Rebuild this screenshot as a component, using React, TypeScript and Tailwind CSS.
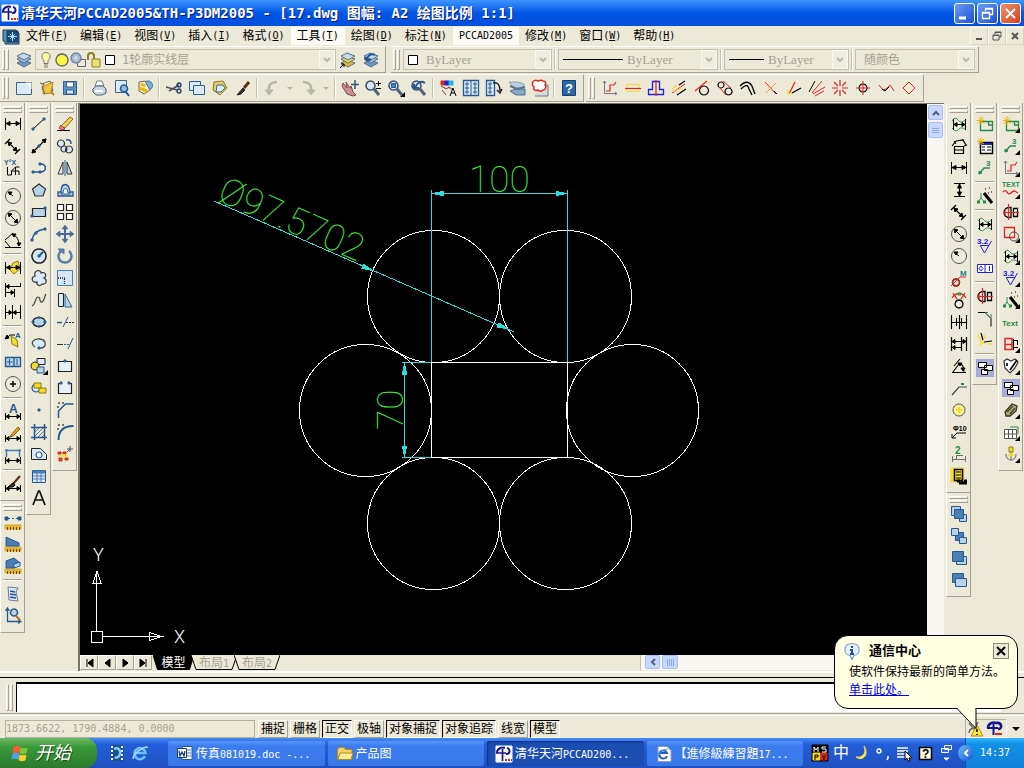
import type { ReactNode } from 'react';
import clsx from 'clsx';

/* ---------- palette used by the toolbar drawings ---------- */

const K = '#000000';
const B = '#24588f';
const L = '#b7d3ea';
const M = '#4a7fb5';
const R = '#e02424';
const G = '#2b8a4a';
const Y = '#f4dc28';
const N = '#2020d8';
const S = '#6d7a90';
const W = '#ffffff';
const X = 'none';

type Path = [d: string, stroke: string, fill?: string, width?: number];
type Label = [text: string, x: number, y: number, size: number, color: string];

interface Glyph {
  p: Path[];
  t?: Label;
}

const dimBase: Path[] = [
  ['M1.5 3v12M16.5 3v12M2 8.5h14', K],
  ['M2 8.5l4-2v4zM16 8.5l-4-2v4z', K, K],
];
const dimLow: Path[] = [
  ['M1.5 10v7M16.5 10v7M2 13.5h14', K],
  ['M2 13.5l3-2v4zM16 13.5l-3-2v4z', K, K],
];
const ruler: Path[] = [
  ['M1 12h16v4h-16z', '#d9a520', '#e8b83a'],
  ['M3.5 14v3M6.5 14v3M9.5 14v3M12.5 14v3M15.5 14v3', '#6a4a00'],
];
const dimHole: Path[] = [
  ['M2 6c3-5 5-2 7 0s5 1 7-2M2 13c3 4 5 3 7 1s5-1 7 1', G],
  ['M3.5 4v11M15.5 4v11M4 9.5h11', K],
  ['M4 9.5l3-2v4zM15 9.5l-3-2v4z', K, K],
];
const sunFrame: Path[] = [
  ['M4.5 6.5h12v9h-12zM12.5 6v4h4', G, X, 1.3],
  ['M5 1v9M1 5.5h8M2 2.5l6 6M8 2.5l-6 6', '#e8b800'],
];
const wand: Path[] = [
  ['M8 6l8 10', K, X, 3],
  ['M5 6v5l-3 4M5 11l3 4', G],
  ['M1 15h3M7 15h3', G, X, 3],
  ['M9 2h1M13 1h1M15 5h1M12 6h1', '#7a4030', X, 1.5],
];
const shaftHole: Path[] = [
  ['M7 4.5h2v10h-2a5 5 0 0 1 0-10zM11.5 5.5h4v8h-4z', K, X, 1.3],
  ['M1 9.5h16M6.5 1v16M3 6v7', R, X, 1.2],
];
const windows: Path[] = [
  ['M0 0h18v18h-18z', '#9aa0d0', '#a9addb'],
  ['M2.5 3.5h8v5h-8zM8.5 6.5h8v5h-8zM5.5 10.5h6v5h-6z', K, W],
];
const roughMark: Path[] = [['M4 8.5h9M4.5 9l4 7 7-12', N]];
const axes: Path[] = [
  ['M3.5 2v12.5h12M2 4l1.5-2 1.5 2M14 13l2 1.500-2 1.500', S],
  ['M5 12h4v-6h4l2-3', R, X, 1.2],
];
const pencil: Path[] = [['M7 10l7-8 2 2-7 7-3 1z', '#7a5a10', '#e8a820']];
const layers = (a: string, b: string, c: string): Path[] => [
  ['M2 12l6-3 8 3-7 4z', '#58708c', c],
  ['M2 8l6-3 8 3-7 4z', '#58708c', b],
  ['M2 5l6-3 8 3-7 4z', '#58708c', a],
];
const lens: Path[] = [
  ['M6.5 2a4.5 4.5 0 1 0 .01 0z', '#40506a', '#d5e6f5', 1.5],
  ['M10 10l5 6', '#50617c', X, 3],
];

const glyphs: Record<string, Glyph> = {
  /* horizontal toolbars */
  layers: { p: layers('#c7d9ea', '#9fbdd8', '#6f98c2') },
  layerCurrent: { p: [...layers('#c7d9ea', '#f0dc50', '#e0b830'), ['M1 17l4-4M5 16v-3h-3', K]] },
  layerPrevious: { p: [...layers('#c7d9ea', '#9fbdd8', '#6f98c2'), ['M5 9c0-5 5-7 8-5M5 10l-2-4M5 10l4-2', B, X, 2]] },
  new: { p: [['M1.5 3.5h15v12h-15z', '#3b648f', '#dbeaf8'], ['M11 4h5v6', W, W]] },
  open: { p: [['M4 5l8-3 3 10-9 3z', '#6e675a', '#f6f2df'], ['M5 15l1-8 9-4-2 11z', '#b88918', '#f0c64a'], ['M2 4l4 1-2 4 3 6', '#6e675a', '#d8cf9c'], ['M13 13l3 3', '#b88918', X, 2]] },
  save: { p: [['M2.5 2.5h13v13h-13z', '#2f5d91', '#5b93ca'], ['M5.5 3h7v5h-7z', '#3b648f', W], ['M5.5 11h7v4h-7z', '#2f5d91', '#dbeaf8']] },
  print: { p: [['M5 7l2-5h5l2 5z', '#6b7a90', W], ['M3 10l3-3h7l3 3v4l-4 2h-6l-3-3z', '#4c5d78', '#c6d4e6'], ['M5 12h8', W, X, 2]] },
  preview: { p: [['M2.5 1.5h11v12h-11z', '#3b648f', '#dbeaf8'], ['M11 6a3.5 3.5 0 1 0 .01 0z', B, '#8fbce4', 1.5], ['M13 13l3 4', B, X, 2]] },
  publish: { p: [['M12 2a4.5 4.5 0 1 0 .01 0z', '#2f6da8', '#79b2e6'], ['M3 3l6-1 2 4 3 5-6 4-5-3z', '#6e675a', '#f1edd8'], ['M3 9l8 3M5 5l4 2', '#e8b800', X, 3]] },
  cut: { p: [['M1 8l11 3M4 12l10-6', '#4b4f5c', X, 1.5], ['M14 4a2 2 0 1 0 .01 0zM14 10a2 2 0 1 0 .01 0z', '#24406b', X, 1.5]] },
  copy: { p: [['M1.5 2.5h11v9h-11z', '#2c608f', '#dbeaf8'], ['M5.5 6.5h11v9h-11z', '#2c608f', '#dbeaf8']] },
  paste: { p: [['M3 3l9-1 4 7-7 7-7-5z', '#8c7a20', '#e3cf62'], ['M6 6h6l2 3-4 4h-5z', '#3b648f', '#dbeaf8']] },
  brush: { p: [['M15 3l-5 6', '#5c3018', X, 3], ['M9 9l-6 7 4-1 4-4z', '#222', '#333']] },
  undo: { p: [['M14 3c-6 0-9 3-8 9', '#b8b6a6', X, 2.5], ['M2 11h8l-4 5z', '#b8b6a6', '#b8b6a6']] },
  redo: { p: [['M4 3c6 0 9 3 8 9', '#b8b6a6', X, 2.5], ['M8 11h8l-4 5z', '#b8b6a6', '#b8b6a6']] },
  pan: { p: [['M2 4l4 5-1-6 4 6 1-2 2 6 3 3-3 1-6-2-5-8z', '#7c4a4a', '#cf8e8e'], ['M14 1v9M10 5.5h8', '#37507c', X, 1.5]] },
  zoomRt: { p: [...lens, ['M12 4.5h5M14.5 2v5M12 9.5h5', K]] },
  zoomWin: { p: [...lens, ['M4.5 4.5h4v4h-4z', B, M]] },
  zoomPrev: { p: [...lens, ['M15 4c-5-3-8 0-10 5M4 5v4h5', B, X, 2]] },
  props: { p: [['M2 2h4v4h-4z', R, R], ['M6 2h4v4h-4z', N, N], ['M10 2h4v4h-4z', '#18b8e0', '#18b8e0'], ['M2 7l5 3 3-2 4 3M3 11l4 5', '#7c4a4a', '#cf8e8e'], ['M11 17l3-8 3 8M12 14h4', K]] },
  design: { p: [['M1.5 1.5h15v15h-15z', B, '#dbeaf8', 1.3], ['M9 2v14', B], ['M4 4h2v2h-2zM4 8h2v2h-2zM4 12h2v2h-2zM12 4h2v2h-2zM12 8h2v2h-2zM12 12h2v2h-2z', B, W]] },
  palettes: { p: [['M1.5 1.5h8v15h-8z', B, '#dbeaf8', 1.3], ['M4 4h2v2h-2zM4 8h2v2h-2zM4 12h2v2h-2z', B, W], ['M8 4c5-1 7 2 7 8M12 11l3 3 2-4', '#222', X, 1.5]] },
  sheets: { p: [['M1 3h9l6 2v4h-10z', '#8ba6c0', '#b9cede'], ['M2 12l6-2h9v6h-9z', '#54708c', '#86a8c4'], ['M2 7l7 3 8-2', '#5f7488', X, 2]] },
  markup: { p: [['M5 6h12v11h-13', S, '#dadada'], ['M2 3c1-2 3-2 5-1 2-1 4-1 5 0 3 0 3 3 2 4 2 2 0 5-2 5-2 2-4 1-5 0-3 1-5 0-4-3-2-1-2-4-1-5z', R, W, 1.5]] },
  help: { p: [['M2.5 1.5h13v15h-13z', '#173e70', '#2d66a5']], t: ['?', 5, 14, 13, '#fff'] },
  hAxes: { p: axes },
  hCenter: { p: [['M3 5.5h12v7h-12z', Y], ['M1 9.5h16', R, X, 1.2]] },
  hSymm: { p: [['M5.5 2.5h7v8h4v5h-15v-5h4z', N, X, 1.3], ['M9 1v16', R, X, 1.3]] },
  hParallel: { p: [['M9 6l6-4M7 16l9-6', K, X, 1.3], ['M2 14l13-9', R], ['M2 10l5-4M4 13l7-4', Y, X, 1.3]] },
  hTangent: { p: [['M11 7a4.5 4.5 0 1 0 .01 0z', K, X, 1.2], ['M2 12l12-10', R, X, 1.2]] },
  hTangent2: { p: [['M5 3a3 3 0 1 0 .01 0zM12.5 9a3.5 3.5 0 1 0 .01 0z', K, X, 1.2], ['M7 2l8 7M3 8l7 8', R]] },
  hCurve: { p: [['M1 7c5-5 9-5 12 0l3 8M2 10c5-5 7-4 8 0l3 6', K, X, 1.3]] },
  hCross: { p: [['M3 3l11 12', R], ['M14 4l-10 10', '#f0a020'], ['M12 12l3 3', K]] },
  hAngle: { p: [['M4 15l6-12', R, X, 1.3], ['M7 14l9-5', K, X, 1.3], ['M3 10v5l4-1', Y, X, 1.3]] },
  hRays: { p: [['M1 13l6-11', K], ['M4 14l10-12M5 15l12-7M7 17l9-5', R]] },
  hStar: { p: [['M9 1v6M9 11v6M1 9h6M11 9h6M3 3l4 4M11 11l4 4M15 3l-4 4M7 11l-4 4', R, X, 1.2]] },
  hTarget: { p: [['M9 5a4 4 0 1 0 .01 0z', K, X, 1.2], ['M9 2v14M2 9h14', R]] },
  hWave: { p: [['M2 6l4 5 3-1 4-4 4 6', R], ['M5 10l3 2 4-4', K]] },
  hDiamond: { p: [['M9 3l6 6-6 6-6-6z', R]] },

  /* dimension column */
  dimLinear: { p: dimBase },
  dimAligned: { p: [['M1 7l5-5M11 17l5-5M4 5l9 9', K, X, 1.2], ['M4 5l4 1-3 3zM13 14l-4-1 3-3z', K, K]] },
  dimOrdinate: { p: [['M3.5 8v8h4v-4l4-4h4M7 12h8v4M11.5 8v8', K]], t: ['Y°X', 0, 6, 7, B] },
  dimRadius: { p: [['M9 1.5a7.5 7.5 0 1 0 .01 0z', '#555'], ['M4 5l5 4', K], ['M4 5l4 0-2 3z', K, K]] },
  dimDiameter: { p: [['M9 1.5a7.5 7.5 0 1 0 .01 0z', '#555'], ['M4 4l10 10', K], ['M4 4l4 1-3 3zM14 14l-4-1 3-3z', K, K]] },
  dimAngular: { p: [['M1 9l8-7M1 16.5h16M1 10l5 6M8 3c5 2 7 6 7 12', K], ['M8 3l4 0-2 3zM15 15l-2-3h4z', K, K]] },
  dimQuick: { p: [['M9 4l5-2 2 8-6 5-4-4z', '#8c7a10', Y], ...dimBase] },
  dimBaseline: { p: [['M1.5 2v14M16.5 2v3M10.5 8v8M2 5.5h15M2 11.5h8', K], ['M2 5.5l3-2v4zM10 11.5l-3-2v4z', K, K]] },
  dimContinue: { p: [['M1.5 2v14M8.5 2v14M16.5 2v14M2 9.5h14', K], ['M8 9.5l-3-2v4zM9 9.5l3-2v4z', K, K]] },
  dimLeader: { p: [['M7 5l6 4 1 7-6-3z', '#8c7a10', Y], ['M2 8l4-4h5', K], ['M1 8l2-4 2 3z', K, K]], t: ['A', 11, 7, 8, B] },
  dimTolerance: { p: [['M1.5 4.5h15v9h-15zM10 5v8', B, L, 1.3], ['M5.5 6v6M2.500 9h6M13 6v6', B]] },
  dimCenter: { p: [['M9 1.5a7.5 7.5 0 1 0 .01 0z', '#555'], ['M9 6v6M6 9h6', K, X, 1.5]] },
  dimEdit: { p: dimLow, t: ['A', 5, 10, 12, B] },
  dimTextEdit: { p: [...dimLow, ...pencil] },
  dimUpdate: { p: [['M1 3.5h16M2.500 2v8M15.500 2v8', M, X, 1.5], ...dimLow] },
  dimStyle: { p: [...dimLow, ['M16 1l-7 8', '#5c3018', X, 2], ['M9 8l-5 4h5l2-2z', K, '#333']] },
  distance: { p: [...ruler, ['M4 5.5h2M8 5.5h2M12 5.5h2', B], ['M1 4h3v3h-3zM14 4h3v3h-3z', B, B]] },
  area: { p: [...ruler, ['M2 2l13 6v3h-13z', B, M]] },
  mass: { p: [...ruler, ['M2 4l8-3 6 5-6 5h-8z', B, M], ['M10 7l6-2v4l-6 2z', B, L]] },
  list: { p: [['M4 2l10 1-2 4 2 9-9-1z', S, '#dbeaf8'], ['M6 6l5 1M6 9l6 1M6 12l6 1', B, X, 1.5]] },
  locate: { p: [['M3.5 2v12.5h13M1.500 4l2-3 2 3M14 12.500l3 2-3 2', B, X, 1.3], ['M10 2a3.5 3.5 0 1 0 .01 0z', B, L, 1.5], ['M12 9l4 4', '#b06a30', X, 2]] },

  /* draw column */
  line: { p: [['M3 14l12-11', K], ['M2 13h2v2h-2zM13 3h2v2h-2z', B, M]] },
  xline: { p: [['M2 16l14-14', K, X, 1.3], ['M2 16l1-4 3 3zM16 2l-4 1 3 3z', K, K], ['M8 8h2v2h-2z', B, B]] },
  pline: { p: [['M3 13h7c7 0 7-8 1-8', B, X, 1.5], ['M2 12h2v2h-2zM9 12h2v2h-2zM9 4h2v2h-2z', B, M]] },
  polygon: { p: [['M9 3l6.5 5-2.5 7h-8l-2.5-7z', '#333', L, 1.2]] },
  rect: { p: [['M2.5 5.5h13v8h-13z', '#222', L, 1.2], ['M1 12h2v2h-2zM14 4h2v2h-2z', B, M]] },
  arc: { p: [['M2 15c1-7 5-10 13-11', B, X, 1.5], ['M1 14h2v2h-2zM5 7h2v2h-2zM14 3h2v2h-2z', B, M]] },
  circle: { p: [['M9 2a7 7 0 1 0 .01 0z', '#222', '#d5e6f5', 1.5], ['M9 9l4-4', B, X, 2], ['M8 8h2v2h-2z', B, B]] },
  cloud: { p: [['M5 7c-2-6 6-7 6-3 5-2 6 4 3 5 4 2 2 7-2 6-2 3-6 1-5-2-6 1-6-5-2-6z', '#333', '#dbeaf8', 1.2]] },
  spline: { p: [['M2 15c4-2 3-9 6-9s1 6 4 5 2-6 4-8', '#444', X, 1.2]] },
  ellipse: { p: [['M9 4.5c8 0 8 9 0 9s-8-9 0-9z', '#222', L, 1.5], ['M2 8h2v2h-2zM14 8h2v2h-2zM8 4h2v1h-2zM8 13h2v1h-2z', B, B]] },
  ellipseArc: { p: [['M5 12c-6-4-1-9 5-8 7 1 7 9 0 9', '#444', '#dbeaf8', 1.3], ['M8 12h2v2h-2z', B, M]] },
  insert: { p: [['M7 1.5h8v6h-8z', '#222', '#dbeaf8'], ['M5 5a4 4 0 1 0 .01 0z', '#222', Y], ['M7 10h7v6h-7z', B, L]] },
  block: { p: [['M6 5a4 4 0 1 0 .01 0z', B, '#dbeaf8', 1.2], ['M4 4h7v5h-7zM9 9h7v5h-7z', '#8c7a10', Y]] },
  point: { p: [['M8 8h2v2h-2z', B, B]] },
  hatch: { p: [['M4.5 1v16M14.5 1v16M1 4.5h16M1 14.5h16', B, X, 1.5], ['M5 9l4-4M5 13l8-8M8 14l6-6M12 14l2-2', M]] },
  region: { p: [['M1.5 3.5h9l6 6v5h-15z', '#222', '#dbeaf8'], ['M9 7a3 3 0 1 0 .01 0z', B, W, 1.2]] },
  table: { p: [['M2.5 3.5h13v12h-13z', B, '#dbeaf8'], ['M3 5h12', M, X, 3], ['M7 4v11M11 4v11M3 9h12M3 12h12', M]] },
  text: { p: [['M3 16l5.500-14h1l5.500 14M5 11h8', '#111', X, 1.7]] },

  /* modify column */
  erase: { p: [['M1 15.5h13', K], ['M5 11l9-9 3 2-8 9z', '#8c6a10', '#f0cf60'], ['M5 10l4 4-3 1-3-2z', '#a04040', '#f08080']] },
  copyObj: { p: [['M5 3a3.5 3.5 0 1 0 .01 0zM13 9a3.5 3.5 0 1 0 .01 0zM8 9a3 3 0 1 0 .01 0z', '#333', '#dbeaf8', 1.2], ['M10 3c4-1 5 1 5 4', B, X, 1.5]] },
  mirror: { p: [['M7 3v12h-5z', '#333', '#dbeaf8'], ['M11 3v12h5z', '#333', L], ['M9 1v16', B]] },
  offset: { p: [['M2 15v-4h3c0-10 8-10 9 0h3v4z', B, L, 1.3], ['M5 13h9v-1h-2c0-6-5-6-5 0h-2z', B, W]] },
  array: { p: [['M1.5 1.5h6v6h-6zM10.5 1.5h6v6h-6zM1.5 10.5h6v6h-6zM10.5 10.5h6v6h-6z', '#222', W, 1.2]] },
  move: { p: [['M9 3v12M3 9h12', '#45689c', X, 2], ['M9 0l3 4h-6zM9 18l3-4h-6zM0 9l4-3v6zM18 9l-4-3v6z', '#45689c', '#45689c', 0.5]] },
  rotate: { p: [['M5 4a6.5 6.5 0 1 0 8 0', '#5b7ba5', X, 2.5], ['M2 2h6v5z', '#5b7ba5', '#5b7ba5']] },
  scale: { p: [['M1.5 1.5h15v15h-15z', M, '#d5e6f5'], ['M2 9h1M4 9h1M6 9h1M8 9h1M8.5 10v1M8.5 12v1M8.5 14v1', '#222', X, 1.3]] },
  stretch: { p: [['M2.5 2.5h5v13h-5z', '#222', '#dbeaf8'], ['M9 3l7 13h-7z', '#3b648f', L]] },
  trim: { p: [['M1 9.5h5', B, X, 1.5], ['M7 14l5-10', B], ['M10 9.5h2M13 9.5h2M16 9.5h2', '#333']] },
  extend: { p: [['M1 9.5h6', '#333'], ['M8 9.5h2M11 9.5h2', B], ['M12 14l5-11', B]] },
  breakPt: { p: [['M2.5 4.5h13v10h-13z', '#222', '#e8f1fa', 1.2], ['M8 3h2v2h-2z', B, M]] },
  breakObj: { p: [['M5 4.5h-2.5v10h13v-10h-2.5', '#222', '#e8f1fa', 1.2], ['M4 3h2v2h-2zM12 3h2v2h-2z', B, S]] },
  chamfer: { p: [['M2.5 17v-7l7-7h8', B, X, 1.5], ['M2 2h2M6 2h2M2 5v2', K]] },
  fillet: { p: [['M2.5 17c0-9 4-14 15-14', B, X, 2], ['M2 2h2M6 2h2M2 5v2', K]] },
  explode: { p: [['M2 7h3v2h-3zM7 7h3v2h-3zM3 13h3v3h-3zM9 13h3v2h-3z', '#c02818', '#e86030'], ['M5 10l3 2M7 10l4 1M2 11h2', Y, X, 2], ['M11 7l3-3M14 1v6M11 4h6', '#555']] },

  /* mechanical columns */
  holeDim: { p: dimHole },
  house: { p: [['M4.5 9.5h9v7h-9zM2 9l4-5 7-1 3 5M13 4v-2M14 9l3-1', K, X, 1.2], ['M4 4l2 3M5 13h8', K]] },
  dimV: { p: [['M4 2.5h11M4 15.5h11M9.5 3v12', K, X, 1.2], ['M9.5 3l-2 4h4zM9.5 15l-2-4h4z', K, K]] },
  reel: { p: [['M6 10a3.5 3.5 0 1 0 .01 0z', '#a02828', X, 1.8], ['M1 17l9-9h6', R]], t: ['M', 10, 7, 8, '#18808a'] },
  arcs: { p: [['M2 7c4-6 10-6 14 0M3 2l4 6M15 2l-4 6', R, X, 1.3], ['M9 9a4 4 0 1 0 .01 0z', K, X, 1.3], ['M8 2h3v2h-3z', G, '#30e030']] },
  dimMulti: { p: [['M1.5 2v14M6.5 5v8M11.5 5v8M16.5 2v14M9.500 2v14M2 9.5h14', K, X, 1.1]] },
  dimChain: { p: [['M1.5 2v14M11.5 2v14M16.5 2v14M2 6.5h14M2 12.5h9', K, X, 1.2], ['M2 6.5l3-2v4zM16 6.5l-3-2v4zM2 12.5l3-2v4z', K, K]] },
  angle: { p: [['M4 9l6-7M2 15.5h14M3 15l6-8M9 6c4 1 5 4 5 9', K, X, 1.1], ['M8 6h4l-2 3zM13 14l-2-3h4z', K, K]] },
  slope: { p: [['M2 16l7-8h8', '#444', X, 1.2], ['M11 5h3', G, X, 2]] },
  bulb: { p: [['M9 3a6 6 0 1 0 .01 0z', '#555', '#f7f29a'], ['M9 6v6M6 9h6', '#f0e020', X, 2]] },
  phi: { p: [['M2 15l5-5h9M2 15v-4M2 15h4', K]], t: ['Φ10', 3, 8, 7, K] },
  two: { p: [['M2.5 11v6M15.5 11v6M3 14.5h12M6 10.5h7M6.5 10v4', '#707070']], t: ['2', 5, 9, 10, G] },
  notes: { p: [['M1 1h13v14h-13z', Y, Y], ['M4.5 2.5h8v11h-8z', K, Y, 1.5], ['M6 5h5M6 8h5M6 11h5', K], ['M7 14h3M11 14h2M14 14h3M9 16h8', K, X, 3]] },
  sunFrame: { p: sunFrame },
  sunList: { p: [['M4.5 5.5h12v11h-12z', K, W, 1.5], ['M5 7h11', N, X, 2], ['M6 10h3M11 10h4M11 13h4M6 13h3', K], ['M5 1v7M1 4.5h8M2 2l6 5M8 2l-6 5', '#e8b800']] },
  leader3: { p: [['M3 15l5-6h6', G, X, 1.3], ['M3 15v-3l3 2z', G, G]], t: ['3', 10, 7, 8, G] },
  wand: { p: wand },
  rough: { p: roughMark, t: ['3.2', 1, 7, 8, N] },
  gdt: { p: [['M1.5 5.5h15v8h-15zM9 6v8', N, W], ['M5 7l2 2.5-2 2.5-2-2.5zM13.5 7v5', N]] },
  shaft: { p: shaftHole },
  corner: { p: [['M2 3.5h7l6 6v8', K], ['M9 3.500h3M15 5v4', G]] },
  weld: { p: [['M5 2l2 7M8 11l8-1', K, X, 1.2], ['M2 4l4 7-2 4M4 9l5 4M12 13h4M8 4l1 3', Y, X, 1.5]] },
  windows: { p: windows },
  axes: { p: axes },
  textWave: { p: [['M1 11c4-5 4 5 8 1s4-1 7 0', R, X, 1.3]], t: ['TEXT', 0, 6, 7, G] },
  sectionView: { p: [['M2.5 2.5h10v10h-10z', R, X, 1.3], ['M12 7a4.5 4.5 0 1 0 .01 0z', '#444']] },
  textGreen: { p: [], t: ['Text', 0, 13, 8, G] },
  clampRed: { p: [['M3 3.5h7v11h-7zM3 9.500h9', R, X, 1.5], ['M11.500 4v11M12 5.500h4M12 12.500h4M15.500 5v5', K]] },
  tag: { p: [['M2 4l3-2 4 2 4-2 3 3-3 6-5 5-5-5z', '#333', W, 1.2], ['M8 13l7-10M5 6v3', K, X, 1.6]] },
  steel: { p: [['M3 11l7-8 5 2-1 5-6 5-4 0z', '#333', '#b0a860', 1.3], ['M5 11l6-6M8 13l5-6', '#444', X, 1.3]] },
  sheet: { p: [['M2.5 6.5h12v9h-12zM6.5 7v9M10.5 7v9M3 11h11', '#555', W], ['M8 4h8v7', G]] },
  bolt: { p: [['M7 2h4v5h-4z', '#8c7a10', Y], ['M4 9c0 8 10 8 10 0M9 7v9', '#909090', X, 1.5], ['M7 9h4v2h-4z', Y, Y]] },

  /* draw order */
  front: { p: [['M1.5 1.5h9v9h-9zM9.5 9.5h7v7h-7z', B, L], ['M4.5 4.5h9v9h-9z', B, M]] },
  back: { p: [['M5.5 5.5h8v8h-8z', B, M], ['M1.5 1.5h7v7h-7zM9.5 10.5h7v6h-7z', B, L]] },
  above: { p: [['M6.5 7.5h10v8h-10z', B, L], ['M2.5 2.5h11v10h-11z', B, M]] },
  below: { p: [['M2.5 2.5h11v9h-11z', B, M], ['M5.5 7.5h11v8h-11z', B, L]] },

  /* layer states */
  bulbOn: { p: [['M9 1.5c5 0 5 6 2 8v3h-4v-3c-3-2-3-8 2-8z', '#777', '#fbf6a0'], ['M7 14h4M7 16h4', '#777']] },
  sun: { p: [['M9 3a6 6 0 1 0 .01 0z', '#667', '#fbf63a', 1.3]] },
  freezeVp: { p: [['M8.5 8.5h8v7h-8z', '#666'], ['M7 2a5 5 0 1 0 .01 0z', '#7088a8', '#a8bcd4', 1.5], ['M7 5v4M5 7h4', '#e4ecf4']] },
  unlock: { p: [['M3 9v-4c0-4 6-4 6 0v3', '#8c8420', X, 2], ['M7 8h8v8h-8z', '#8c8420', '#e8e070']] },
  swatch: { p: [['M4.5 4.5h9v9h-9z', K, W]] },

  /* logos */
  app: { p: [['M1 1h16v16h-16z', W, W], ['M1 8h10M7.500 4v12', '#16168c', X, 1.7], ['M2 8c0-5 5-6 8-5M12 3a3 3 0 1 1-1 6', '#16168c', X, 2], ['M10 15h2M13 15h2M16 15h1', R, X, 2]] },
  appBare: { p: [['M1 8h11M7.500 4v11', '#16168c', X, 2], ['M2 8c0-5 5-6 8-5 6-1 7 6 2 6', '#16168c', X, 2.5], ['M9 14h7', R, X, 2]] },
  dwg: { p: [['M1 3h13l3 3v11h-14v-3h-2z', '#1d3e60', '#5a90b8'], ['M5 4h11v11h-11z', '#1d3e60', '#1c4a70'], ['M10.5 5v9M6 9.5h9M8 7l5 5M13 7l-5 5', '#a8e0f8']] },
  word: { p: [['M6 1.5h10v13h-10z', '#2b579a', W], ['M11 5h4M11 8h4M11 11h4', M], ['M1.5 3.5h9v9h-9z', '#1b3c78', W], ['M3 6l1 5 2-4 2 4 1-5', '#1b3c78', X, 1.3]] },
  folder: { p: [['M1.5 4.5l1.5-2h5l1.5 2h6.5v10h-14.5z', '#b88918', '#f6d35e'], ['M4 8h13l-2 6.5h-13z', '#b88918', '#fdea9a']] },
  ie: { p: [['M3 1.5h9l4 4v11h-13z', '#8ca0bc', W], ['M12 11a4 4 0 1 1 0-3h-8', '#1c60c0', X, 2], ['M2 13c2-6 7-9 11-9', '#60a0e8']] },
  ieBare: { p: [['M14 12a5.5 5.5 0 1 1 .5-3h-10', '#6cc4fc', X, 2.5], ['M2 15c0-5 9-12 15-12', '#a8dcfc', X, 1.5]] },
  media: { p: [['M3 1.5h12v15h-12z', '#1c5090', '#1c5090'], ['M3 3h2M3 7h2M3 11h2M3 15h2M13 3h2M13 7h2M13 11h2M13 15h2', W, X, 2], ['M6 5c4-2 7 1 6 5s-4 4-5 3', '#7cd0ff', X, 2.5]] },
  flag: { p: [['M3 3c2-1 4-1 6 0l-1 6c-2-1-4-1-6 0z', '#f06030', '#f06030'], ['M10 4c2 1 4 1 6 0l-1 5c-2 1-4 1-6 0z', '#78c840', '#78c840'], ['M2 10c2-1 4-1 6 0l-1 5c-2-1-4-1-6 0z', '#50a0f0', '#50a0f0'], ['M9 11c2 1 4 1 6 0l-1 5c-2 1-4 1-6 0z', '#f8d030', '#f8d030']] },
  mspy: { p: [['M1 1h16v16h-16z', K, K], ['M2 9h7v7h-7z', Y, Y], ['M10 9h6v7h-6z', R, R], ['M3 8v-5l2 3 2-3v5M15 3h-4v2h4v3h-4', W], ['M4 16v-5h3v2h-3M11 11l2 2 2-2M13 13v3', K]] },
  moon: { p: [['M11 2c3 8-2 12-8 11 6 5 14-2 8-11z', '#f8d840', '#f8e860']] },
  punct: { p: [['M5 5a2 2 0 1 0 .01 0zM14 12v2l-1 2', W, X, 1.5]] },
  softKb: { p: [['M2 4h11M2 7h11M2 10h11M2 13h9', W, X, 1.5], ['M10 7l7 7h-3l1 3h-2l-1-3-2 2z', K, W]] },
  imeHelp: { p: [['M3.5 3.5h12v12h-12z', K, '#fffbe0', 1.5]], t: ['?', 6, 14, 12, K] },
  restoreBar: { p: [['M7.5 1.5h7v4h-7zM4.5 4.5h7v4h-7z', W, '#2f6be0'], ['M7 14h5l-2.500 2z', W, W]] },
  comm: { p: [['M3 3l5 6M12 2l-4 7M3 13c0-4 4-6 7-4', '#666', X, 1.5], ['M11 5l6 11h-12z', '#b08c00', '#fbe83a'], ['M11 9v3M11 14v1', K, X, 1.5]] },
  info: { p: [['M9 1.5c9 0 9 11 2 12l-2 4-2-4c-7-1-7-12 2-12z', '#7f9cc4', '#e6f0fb', 1.2], ['M9 4v2M7 8h2v4M7 12h4', '#1f4f9c', X, 2]] },
};

interface IconProps {
  name: string;
  flyout?: boolean;
}

function Icon({ name, flyout }: IconProps) {
  const glyph = glyphs[name];
  return (
    <svg viewBox="0 0 18 18" className="h-[18px] w-[18px] shrink-0" aria-hidden="true">
      {glyph.p.map(([d, stroke, fill = 'none', width = 1], i) => (
        <path key={i} d={d} stroke={stroke} fill={fill} strokeWidth={width} />
      ))}
      {glyph.t && (
        <text
          x={glyph.t[1]}
          y={glyph.t[2]}
          fontSize={glyph.t[3]}
          fill={glyph.t[4]}
          className="font-['Liberation_Sans',sans-serif] font-bold"
        >
          {glyph.t[0]}
        </text>
      )}
      {flyout && <path d="M18 13v5h-5z" fill={K} />}
    </svg>
  );
}

/* Latin runs are set smaller so that two of them are as wide as one hanzi */
function Mixed({ text }: { text: string }) {
  return (
    <>
      {text.split(/([\x21-\xff][\x20-\xff]*)/).map((run, i) =>
        i % 2 ? <span key={i} className="text-[10px]">{run}</span> : run,
      )}
    </>
  );
}

/* ---------- toolbars ---------- */

const columns = {
  dimension: 'dimLinear dimAligned dimOrdinate | dimRadius dimDiameter dimAngular | dimQuick dimBaseline dimContinue | dimLeader dimTolerance dimCenter | dimEdit dimTextEdit dimUpdate | dimStyle',
  inquiry: 'distance area mass | list locate',
  draw: 'line xline pline polygon rect arc circle cloud spline ellipse ellipseArc insert+ block point hatch region table text',
  modify: 'erase copyObj mirror offset array move rotate scale stretch trim extend breakPt breakObj chamfer fillet explode',
  mechDim: 'holeDim house dimLinear dimV dimAligned dimDiameter dimRadius reel arcs dimMulti dimChain angle slope bulb phi two notes',
  order: 'front back above below',
  mechEdit: 'sunFrame sunList leader3 | wand | holeDim rough gdt | shaft corner weld | windows',
  mechAll: 'sunFrame+ leader3+ axes+ textWave+ shaft sectionView+ holeDim+ rough+ wand+ textGreen clampRed+ tag+ windows steel+ sheet+ bolt+',
};

const standardBar = 'new open save | print preview publish | cut copy paste brush | undo , redo , | pan zoomRt zoomWin+ zoomPrev | props design palettes sheets markup | help';
const helperBar = 'hAxes hCenter hSymm hParallel hTangent hTangent2 hCurve hCross hAngle hRays hStar hTarget hWave hDiamond';

function ToolButton({ item, className }: { item: string; className: string }) {
  const name = item.replace('+', '');
  return (
    <button type="button" aria-label={name} className={clsx('flex shrink-0 items-center justify-center', className)}>
      <Icon name={name} flyout={item.endsWith('+')} />
    </button>
  );
}

function Column({ items, label }: { items: string; label: string }) {
  return (
    <div role="toolbar" aria-label={label} className="flex w-[25px] flex-col border-r border-b border-l border-[#a5a291] border-l-white pb-[5px]">
      <div className="flex h-[10px] flex-col gap-px px-[2px] pt-[3px]">
        <span className="h-[3px] border border-white border-r-[#a5a291] border-b-[#a5a291]" />
        <span className="h-[3px] border border-white border-r-[#a5a291] border-b-[#a5a291]" />
      </div>
      {items.split(' ').map((item, i) =>
        item === '|' ? (
          <span key={i} className="mx-[2px] my-[2px] h-[2px] border-t border-b border-[#a5a291] border-b-white" />
        ) : (
          <ToolButton key={i} item={item} className="h-[22px]" />
        ),
      )}
    </div>
  );
}

function Grip() {
  return (
    <div className="flex w-[12px] shrink-0 gap-px py-[2px] pl-[2px]">
      <span className="w-[3px] border border-white border-r-[#a5a291] border-b-[#a5a291]" />
      <span className="w-[3px] border border-white border-r-[#a5a291] border-b-[#a5a291]" />
    </div>
  );
}

function Bar({ label, children }: { label: string; children: ReactNode }) {
  return (
    <div role="toolbar" aria-label={label} className="flex items-stretch border-t border-r border-b border-[#a5a291] border-t-white pr-[3px]">
      <Grip />
      {children}
    </div>
  );
}

function barItems(items: string) {
  return items.split(' ').map((item, i) => {
    if (item === '|') return <span key={i} className="mx-[2px] my-[3px] w-[2px] border-r border-l border-[#c5c2b0] border-r-white" />;
    if (item === ',') {
      return (
        <span key={i} className="flex w-[13px] items-center justify-center">
          <span className="border-x-[3px] border-t-[3px] border-x-transparent border-t-[#b8b6a6]" />
        </span>
      );
    }
    return <ToolButton key={i} item={item} className="w-[23px]" />;
  });
}

interface ComboProps {
  label: string;
  value: string;
  className: string;
  children?: ReactNode;
}

function Combo({ label, value, className, children }: ComboProps) {
  return (
    <div className={clsx('my-[2px] flex items-center border border-[#c5c2b0]', className)}>
      {children}
      <select
        disabled
        aria-label={label}
        className={clsx(
          'min-w-0 flex-1 appearance-none bg-transparent pl-1 text-[#a5a28f] opacity-100',
          value === 'ByLayer' ? "font-['Liberation_Serif',serif] text-[13px]" : 'text-xs',
        )}
      >
        <option>{value}</option>
      </select>
      <span className="flex h-full w-4 items-center justify-center border border-[#f8f7f0] bg-[#efede0]">
        <svg viewBox="0 0 8 6" className="h-[6px] w-2">
          <path d="M1 1l3 3 3-3" stroke="#bcb9a8" strokeWidth="2" fill="none" />
        </svg>
      </span>
    </div>
  );
}

const comboRule = <span className="mx-[2px] my-[2px] w-[2px] border-r border-l border-[#c5c2b0] border-r-white" />;

/* ---------- window frame ---------- */

function TitleBar() {
  const frame = 'flex h-[21px] w-[21px] items-center justify-center rounded-[3px] border border-white';
  return (
    <header className="flex h-[26px] shrink-0 items-center bg-linear-to-b from-[#3d95ff] via-[#0055e5] to-[#0450dc] pr-[3px] pl-px text-white">
      <Icon name="app" />
      <h1 className="ml-[2px] flex-1 text-sm font-bold whitespace-pre [text-shadow:1px_1px_#0a1883]">
        清华天河PCCAD2005&amp;TH-P3DM2005 - [17.dwg 图幅: A2 绘图比例 1:1]
      </h1>
      <div className="flex gap-[2px]">
        <button type="button" aria-label="最小化" className={clsx(frame, 'bg-linear-to-br from-[#6f9cf4] to-[#1c4fd0]')}>
          <svg viewBox="0 0 19 19" className="h-[19px] w-[19px]"><path d="M4 14h7" stroke="#fff" strokeWidth="3" /></svg>
        </button>
        <button type="button" aria-label="还原" className={clsx(frame, 'bg-linear-to-br from-[#6f9cf4] to-[#1c4fd0]')}>
          <svg viewBox="0 0 19 19" className="h-[19px] w-[19px]"><path d="M7.5 7v-2.500h7v6h-3M4.5 8.5h7v6h-7zM7 5h8M4 9h8" stroke="#fff" strokeWidth="1.3" fill="none" /></svg>
        </button>
        <button type="button" aria-label="关闭" className={clsx(frame, 'bg-linear-to-br from-[#f0906c] to-[#d03c10]')}>
          <svg viewBox="0 0 19 19" className="h-[19px] w-[19px]"><path d="M5 5l9 9M14 5l-9 9" stroke="#fff" strokeWidth="2" /></svg>
        </button>
      </div>
    </header>
  );
}

const menus: [string, string][] = [
  ['文件', 'F'], ['编辑', 'E'], ['视图', 'V'], ['插入', 'I'], ['格式', 'O'], ['工具', 'T'], ['绘图', 'D'],
  ['标注', 'N'], ['PCCAD2005', ''], ['修改', 'M'], ['窗口', 'W'], ['帮助', 'H'],
];

function MenuBar() {
  const small = 'flex h-[18px] w-[18px] items-center justify-center border border-[#f8f7f0] border-r-[#d8d4c0] border-b-[#d8d4c0]';
  return (
    <nav className="flex h-5 shrink-0 items-center pl-[2px] text-xs">
      <Icon name="dwg" />
      {menus.map(([name, key]) => (
        <button
          key={name}
          type="button"
          className={clsx('flex h-[18px] items-center px-[6px]', (key === 'T' || !key) && 'bg-[#fbfaf5]')}
        >
          {key ? name : <span className="text-[10px]">{name}</span>}
          {key && <span className="text-[10px]">(<u>{key}</u>)</span>}
        </button>
      ))}
      <div className="ml-auto flex">
        <button type="button" aria-label="最小化文档" className={small}>
          <svg viewBox="0 0 10 10" className="h-[10px] w-[10px]"><path d="M2 8h6" stroke="#555" strokeWidth="2" /></svg>
        </button>
        <button type="button" aria-label="还原文档" className={small}>
          <svg viewBox="0 0 10 10" className="h-[10px] w-[10px]"><path d="M3 3v-2h6v5h-2M1 4h6v5h-6zM3 1.5h6M1 4.5h6" stroke="#555" fill="none" /></svg>
        </button>
        <button type="button" aria-label="关闭文档" className={small}>
          <svg viewBox="0 0 10 10" className="h-[10px] w-[10px]"><path d="M2 2l6 6M8 2l-6 6" stroke="#555" strokeWidth="2" /></svg>
        </button>
      </div>
    </nav>
  );
}

/* ---------- drawing area ---------- */

const circles = [
  [433, 296], [565, 296],
  [365, 410], [632, 410],
  [433, 523], [565, 523],
];

function Drawing() {
  const dimText = "font-['Roboto','Liberation_Sans',sans-serif] font-thin";
  return (
    <svg className="block h-full w-full bg-black" role="img" aria-label="17.dwg">
      <g transform="translate(-80 -104)">
        <g fill="none" stroke="#fff" shapeRendering="crispEdges">
          {circles.map(([x, y]) => (
            <circle key={`${x}-${y}`} cx={x + 0.5} cy={y + 0.5} r="66" />
          ))}
          <path d="M431.5 362.5h136v95h-136z" />
        </g>
        <g stroke="#28e0e0" fill="none" shapeRendering="crispEdges">
          <path d="M431.5 190v172M567.5 190v172" />
          <path d="M432 193.5h136M402 362.5h29M402 457.5h29M404.5 362v96" />
          <path d="M214 201L514 332" />
        </g>
        <g stroke="#28e0e0" fill="#28e0e0" shapeRendering="crispEdges">
          <path d="M432 193.5l11-2v4zM567 193.5l-11-2v4zM404.5 363l-2 11h4zM404.5 457l-2-11h4z" />
          <path d="M373 270.5l-9-6-2 4zM508 329l-9-6-2 4z" />
        </g>
        <g fill="#3cf03c" fontSize="37" className={dimText}>
          <text x="469" y="192">100</text>
          <text transform="translate(216 200) rotate(23.6)">Ø97.5702</text>
          <text transform="translate(403 430) rotate(-90)">70</text>
        </g>
        <g fill="none" stroke="#fff" shapeRendering="crispEdges">
          <path d="M91.5 631.5h11v11h-11zM96.5 571v60M102 636.5h60M97 571l-4 12h8zM162 636.5l-13-4v8z" />
        </g>
        <g fill="#fff" fontSize="18" className="font-['Roboto','Liberation_Sans',sans-serif] font-light">
          <text x="93" y="561">Y</text>
          <text x="174" y="643">X</text>
        </g>
      </g>
    </svg>
  );
}

const scrollBtn = 'flex items-center justify-center rounded-[2px] border border-[#a9bff0] bg-[#c8d7fc]';

function VerticalScroll() {
  return (
    <div className="flex w-[17px] shrink-0 flex-col items-center gap-[2px] bg-[#f7f6f1] pt-px">
      <button type="button" aria-label="向上滚动" className={clsx(scrollBtn, 'h-[15px] w-[15px]')}>
        <svg viewBox="0 0 8 6" className="h-[6px] w-2"><path d="M1 5l3-3 3 3" stroke="#4d6185" strokeWidth="2" fill="none" /></svg>
      </button>
      <div className={clsx(scrollBtn, 'h-4 w-[15px] flex-col gap-px')}>
        <span className="h-px w-[7px] bg-[#8ea9e8]" />
        <span className="h-px w-[7px] bg-[#8ea9e8]" />
        <span className="h-px w-[7px] bg-[#8ea9e8]" />
      </div>
    </div>
  );
}

const tabNav: [string, string][] = [
  ['第一个', 'M4 1v8M10 1v8l-5-4z'],
  ['上一个', 'M9 1v8l-5-4z'],
  ['下一个', 'M4 1v8l5-4z'],
  ['最后一个', 'M9 1v8M3 1v8l5-4z'],
];

function LayoutTab({ name, active }: { name: string; active?: boolean }) {
  return (
    <button type="button" className={clsx('relative -ml-[3px] flex h-[15px] items-center justify-center text-xs', active ? 'w-[41px] text-white' : 'w-[46px] text-[#a5a28f]')}>
      <svg viewBox="0 0 46 15" preserveAspectRatio="none" className="absolute inset-0 h-full w-full">
        <path d="M0 0l5 14.500h36l5-14.500" fill={active ? '#000' : '#ece9d8'} stroke="#000" />
      </svg>
      <span className="relative"><Mixed text={name} /></span>
    </button>
  );
}

function LayoutTabs() {
  return (
    <div className="flex h-4 shrink-0 items-start">
      {tabNav.map(([label, d]) => (
        <button key={label} type="button" aria-label={label} className="flex h-[15px] w-[18px] items-center justify-center border border-white border-r-[#a5a291] border-b-[#a5a291]">
          <svg viewBox="0 0 12 10" className="h-[10px] w-3"><path d={d} fill="#000" stroke="#000" /></svg>
        </button>
      ))}
      <div className="ml-[4px] flex">
        <LayoutTab name="模型" active />
        <LayoutTab name="布局1" />
        <LayoutTab name="布局2" />
      </div>
      <div className="ml-auto flex h-[15px] w-[304px] gap-[2px] border-l border-[#c5c2b0] bg-[#f7f6f1] pl-1">
        <button type="button" aria-label="向左滚动" className={clsx(scrollBtn, 'h-[14px] w-[15px]')}>
          <svg viewBox="0 0 6 8" className="h-2 w-[6px]"><path d="M5 1l-3 3 3 3" stroke="#4d6185" strokeWidth="2" fill="none" /></svg>
        </button>
        <div className={clsx(scrollBtn, 'h-[14px] w-4 gap-px')}>
          <span className="h-[7px] w-px bg-[#8ea9e8]" />
          <span className="h-[7px] w-px bg-[#8ea9e8]" />
          <span className="h-[7px] w-px bg-[#8ea9e8]" />
          <span className="h-[7px] w-px bg-[#8ea9e8]" />
        </div>
      </div>
    </div>
  );
}

/* ---------- bottom of the window ---------- */

function CommandLine() {
  return (
    <div className="h-[44px] shrink-0 border-t-2 border-white">
      <div className="mt-[4px] flex h-[37px] border-t border-b border-black border-b-[#a5a291] pt-1 pl-1">
        <Grip />
        <input type="text" aria-label="命令行" className="h-[30px] min-w-0 flex-1 border-t-2 border-l border-black bg-white px-1 text-xs outline-none" />
        <span className="w-[23px]" />
      </div>
    </div>
  );
}

const modes: [string, boolean][] = [
  ['捕捉', false], ['栅格', false], ['正交', true], ['极轴', false],
  ['对象捕捉', true], ['对象追踪', true], ['线宽', false], ['模型', true],
];

function StatusBar() {
  return (
    <div className="flex h-[23px] shrink-0 items-center border-t border-white pt-[3px] pr-[2px] pl-[5px] text-xs">
      <output className="h-[18px] w-[250px] border border-[#b5b2a0] text-[10px] leading-4 whitespace-pre text-[#a5a28f]">
        1873.6622, 1790.4884, 0.0000
      </output>
      <div className="ml-[3px] flex gap-[2px]">
        {modes.map(([name, on]) => (
          <button
            key={name}
            type="button"
            aria-pressed={on}
            className={clsx(
              'h-[18px] border px-[2px] leading-4',
              on ? 'border-black border-r-white border-b-white' : 'border-white border-r-[#a5a291] border-b-[#a5a291]',
            )}
          >
            {name}
          </button>
        ))}
      </div>
      <div className="ml-auto flex items-center gap-[3px]">
        <div className="flex h-[19px] w-[42px] items-center gap-[2px] border border-[#b5b2a0] border-r-white border-b-white">
          <Icon name="comm" />
          <Icon name="appBare" />
        </div>
        <button type="button" aria-label="状态栏菜单" className="flex h-4 w-3 items-center justify-center">
          <span className="border-x-4 border-t-4 border-x-transparent border-t-black" />
        </button>
      </div>
    </div>
  );
}

const tasks: [string, string, boolean][] = [
  ['word', '传真081019.doc -...', false],
  ['folder', '产品图', false],
  ['app', '清华天河PCCAD200...', true],
  ['ie', '【進修級練習題17...', false],
];

function Taskbar() {
  return (
    <footer className="flex h-[30px] shrink-0 items-stretch bg-linear-to-b from-[#4a8cf5] via-[#245edb] via-20% to-[#1f50c0] text-xs text-white">
      <div className="flex w-[168px] shrink-0 items-center">
        <button type="button" className="flex h-full w-[97px] items-center gap-[6px] rounded-r-xl bg-linear-to-b from-[#6cb864] via-[#3a9a3a] via-30% to-[#2c7a2c] pl-[11px] text-lg italic [text-shadow:1px_1px_#1c4c1c]">
          <Icon name="flag" />
          开始
        </button>
        <div className="ml-[11px] flex gap-[5px]">
          <button type="button" aria-label="媒体播放器"><Icon name="media" /></button>
          <button type="button" aria-label="浏览器"><Icon name="ieBare" /></button>
        </div>
      </div>
      <div className="flex min-w-0 flex-1 gap-[3px] pt-[3px] pb-[2px]">
        {tasks.map(([icon, name, active]) => (
          <button
            key={name}
            type="button"
            className={clsx(
              'flex min-w-0 flex-1 basis-0 items-center gap-[2px] rounded-[2px] pl-[8px] whitespace-nowrap',
              active ? 'bg-[#1c4eb2] shadow-[inset_1px_1px_2px_#0d2f80]' : 'bg-linear-to-b from-[#5a96f8] via-[#3c7cf0] via-20% to-[#3a78e8]',
            )}
          >
            <Icon name={icon} />
            <span className="whitespace-pre"><Mixed text={name} /></span>
          </button>
        ))}
      </div>
      <div className="flex w-[162px] shrink-0 items-center gap-[3px] pl-[8px]">
        <Icon name="mspy" />
        <span className="w-[18px] text-center text-base leading-4">中</span>
        <Icon name="moon" />
        <Icon name="punct" />
        <Icon name="softKb" />
        <Icon name="imeHelp" />
        <Icon name="restoreBar" />
      </div>
      <div className="flex w-[59px] shrink-0 items-center border-l border-[#0b4cb8] bg-linear-to-b from-[#30b8f8] via-[#1290e8] via-20% to-[#1080d8]">
        <button type="button" aria-label="显示隐藏的图标" className="-ml-2 flex h-4 w-4 shrink-0 items-center justify-center rounded-full bg-linear-to-br from-[#6cb8f8] to-[#1058d0]">
          <svg viewBox="0 0 6 8" className="h-2 w-[6px]"><path d="M5 1l-3 3 3 3" stroke="#fff" strokeWidth="2" fill="none" /></svg>
        </button>
        <time className="ml-[6px] text-[10px]">14:37</time>
      </div>
    </footer>
  );
}

function Balloon() {
  return (
    <aside className="absolute right-[6px] bottom-[59px] h-[74px] w-[184px] rounded-[14px] border border-black bg-[#ffffe1] pt-[6px] pr-2 pl-[8px] text-xs">
      <div className="flex items-center">
        <Icon name="info" />
        <h2 className="ml-2 flex-1 text-[13px] leading-4 font-bold">通信中心</h2>
        <button type="button" aria-label="关闭" className="flex h-4 w-4 items-center justify-center border border-[#8a8878] bg-[#ece9d8]">
          <svg viewBox="0 0 10 10" className="h-[10px] w-[10px]"><path d="M1 1l8 8M9 1l-8 8" stroke="#000" strokeWidth="2" /></svg>
        </button>
      </div>
      <p className="mt-[3px] pl-[6px] leading-[18px] whitespace-nowrap">使软件保持最新的简单方法。</p>
      <a href="#update" className="pl-[6px] leading-[18px] text-[#0000f0] underline">单击此处。</a>
      <svg viewBox="0 0 22 22" className="absolute top-[72px] left-[122px] h-[22px] w-[22px]">
        <path d="M0 0.500l19 20v-20" fill="#ffffe1" stroke="#000" />
        <path d="M1 0h17" stroke="#ffffe1" strokeWidth="2" />
      </svg>
    </aside>
  );
}

export default function App() {
  return (
    <div className="relative flex h-screen min-h-[700px] flex-col overflow-hidden bg-[#ece9d8] font-['DejaVu_Sans_Mono','Noto_Sans_CJK_SC',monospace] text-black">
      <TitleBar />
      <MenuBar />

      <div className="flex h-7 shrink-0 gap-[5px] pb-px">
        <Bar label="图层">
          <ToolButton item="layers" className="w-[23px]" />
          <Combo label="图层" value="1轮廓实线层" className="w-[301px]">
            <span className="flex pl-[2px]">
              {['bulbOn', 'sun', 'freezeVp', 'unlock', 'swatch'].map((name) => (
                <span key={name} className="flex w-4 justify-center"><Icon name={name} /></span>
              ))}
            </span>
          </Combo>
          <ToolButton item="layerCurrent" className="w-[23px]" />
          <ToolButton item="layerPrevious" className="w-[23px]" />
        </Bar>
        <Bar label="特性">
          <Combo label="颜色" value="ByLayer" className="w-[149px]">
            <Icon name="swatch" />
          </Combo>
          {comboRule}
          <Combo label="线型" value="ByLayer" className="w-[160px]">
            <span className="ml-1 h-px w-[60px] bg-black" />
          </Combo>
          {comboRule}
          <Combo label="线宽" value="ByLayer" className="w-[125px]">
            <span className="ml-1 h-px w-[35px] bg-black" />
          </Combo>
          {comboRule}
          <Combo label="打印样式" value="随颜色" className="w-[120px] pl-1" />
        </Bar>
      </div>

      <div className="flex h-[29px] shrink-0 gap-[2px] pb-px">
        <Bar label="标准">{barItems(standardBar)}</Bar>
        <Bar label="辅助线">{barItems(helperBar)}</Bar>
      </div>

      <main className="flex min-h-0 flex-1">
        <div className="flex w-[78px] shrink-0 items-start gap-px">
          <div>
            <Column items={columns.dimension} label="标注" />
            <Column items={columns.inquiry} label="查询" />
          </div>
          <Column items={columns.draw} label="绘图" />
          <Column items={columns.modify} label="修改" />
        </div>
        <section className="flex min-w-0 flex-1 flex-col border-t border-l-2 border-[#77756a]">
          <div className="flex min-h-0 flex-1">
            <div className="min-w-0 flex-1"><Drawing /></div>
            <VerticalScroll />
          </div>
          <LayoutTabs />
        </section>
        <div className="flex w-20 shrink-0 items-start gap-px pl-[2px]">
          <div>
            <Column items={columns.mechDim} label="机械标注" />
            <Column items={columns.order} label="绘图次序" />
          </div>
          <Column items={columns.mechEdit} label="机械编辑" />
          <Column items={columns.mechAll} label="机械工具" />
        </div>
      </main>

      <CommandLine />
      <StatusBar />
      <Taskbar />
      <Balloon />
    </div>
  );
}
